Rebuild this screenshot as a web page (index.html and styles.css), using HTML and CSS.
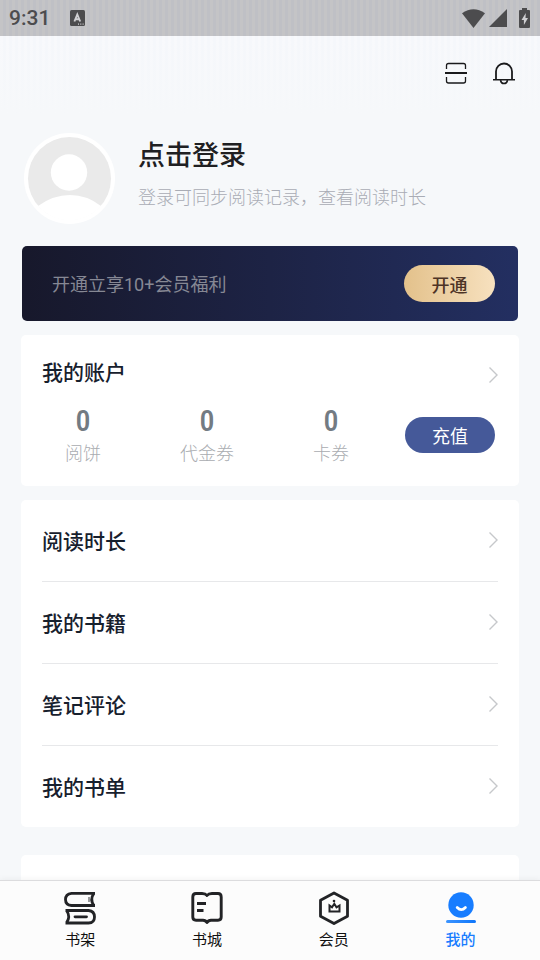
FILE: index.html
```html
<!DOCTYPE html>
<html lang="zh-CN">
<head>
<meta charset="utf-8">
<meta name="viewport" content="width=device-width, initial-scale=1">
<title>我的</title>
<link rel="stylesheet" href="styles.css">
</head>
<body>
<div class="status">
  <span class="status-time">9:31</span>
  <svg class="status-badge" viewBox="0 0 15 16" width="15" height="16" aria-hidden="true"><rect width="15" height="16" rx="1.5" fill="#4c4c4e"/><path d="M4.4 11.5 7.3 4.5 10.2 11.5M5.3 9.3h4" fill="none" stroke="#d0d0d3" stroke-width="1.9"/><path d="M8 14.200h1M10.300 14.200h1M12.600 14.200h1" stroke="#d0d0d3" stroke-width="1.200"/></svg>
  <span class="status-icons">
    <svg viewBox="0 0 23 19" width="23" height="19" aria-hidden="true"><path d="M0 4.2Q11.5-3.6 23 4.2L11.5 19Z" fill="#4c4c4e"/></svg>
    <svg viewBox="0 0 18 18" width="18" height="18" aria-hidden="true"><path d="M18 0V18H0Z" fill="#4c4c4e"/></svg>
    <svg class="battery" viewBox="0 0 11 20" width="11" height="20" aria-hidden="true"><path d="M3 0h5v2h2q1 0 1 1v16q0 1-1 1H1q-1 0-1-1V3q0-1 1-1h2Z" fill="#4c4c4e"/><path d="M6.8 5 2.5 12h2.4v5L9 10H6.5Z" fill="#d0d0d3"/></svg>
  </span>
</div>
<main class="page">
  <header class="tools">
    <button class="icon-button" aria-label="扫一扫"><svg viewBox="0 0 24 24" width="24" height="24"><path d="M2.5 8V4.5Q2.5 2.5 4.5 2.5H19.500Q21.500 2.500 21.500 4.500V8M2.500 16v4Q2.500 22 4.500 22H19.500Q21.500 22 21.500 20V16" fill="none" stroke="#1a1a1c" stroke-width="1.300"/><path d="M1 12h22" stroke="#1a1a1c" stroke-width="2"/></svg></button>
    <button class="icon-button" aria-label="消息"><svg viewBox="0 0 24 24" width="24" height="24"><path d="M4 19V10.500a8 8 0 0 1 16 0V19" fill="none" stroke="#1a1a1c" stroke-width="1.800"/><path d="M1 18.800h22M8.500 19.500q.6 3 3.500 3t3.500-3" fill="none" stroke="#1a1a1c" stroke-width="1.500"/></svg></button>
  </header>
  <a class="profile" href="#login">
    <svg class="avatar" viewBox="0 0 91 91" width="91" height="91" aria-hidden="true"><circle cx="45.500" cy="45.500" r="45.500" fill="#fff"/><circle cx="45.500" cy="45.500" r="41.500" fill="#eaeaea"/><circle cx="45" cy="39.500" r="18.200" fill="#fff"/><path d="M14 73Q29 62 46 62T77 73A42 42 0 0 1 14 73Z" fill="#fff"/></svg>
    <span class="profile-text"><span class="profile-name">点击登录</span><span class="profile-hint">登录可同步阅读记录，查看阅读时长</span></span>
  </a>
  <section class="banner">
    <p class="banner-text">开通立享10+会员福利</p>
    <button class="pill gold">开通</button>
  </section>
  <section class="card account">
    <a class="account-title" href="#account"><span>我的账户</span><svg class="chevron" viewBox="0 0 10 18" width="10" height="18" aria-hidden="true"><path d="M1.500 1.500 9 9 1.500 16.500" /></svg></a>
    <div class="account-row">
      <dl class="stats">
        <div class="stat"><dt>阅饼</dt><dd>0</dd></div>
        <div class="stat"><dt>代金券</dt><dd>0</dd></div>
        <div class="stat"><dt>卡券</dt><dd>0</dd></div>
      </dl>
      <button class="pill blue">充值</button>
    </div>
  </section>
  <nav class="card menu">
    <a href="#time">阅读时长<svg class="chevron" viewBox="0 0 10 18" width="10" height="18" aria-hidden="true"><path d="M1.500 1.500 9 9 1.500 16.500" /></svg></a>
    <a href="#books">我的书籍<svg class="chevron" viewBox="0 0 10 18" width="10" height="18" aria-hidden="true"><path d="M1.500 1.500 9 9 1.500 16.500" /></svg></a>
    <a href="#notes">笔记评论<svg class="chevron" viewBox="0 0 10 18" width="10" height="18" aria-hidden="true"><path d="M1.500 1.500 9 9 1.500 16.500" /></svg></a>
    <a href="#lists">我的书单<svg class="chevron" viewBox="0 0 10 18" width="10" height="18" aria-hidden="true"><path d="M1.500 1.500 9 9 1.500 16.500" /></svg></a>
  </nav>
  <section class="card more"></section>
</main>
<nav class="tabs">
  <a href="#shelf"><svg viewBox="0 0 32 34" width="32" height="34" aria-hidden="true"><g fill="none" stroke="#222326" stroke-width="2.800"><path d="M31 2.300H7.500Q1.500 3 1.500 8.500t6 6H31M29.800 2.500q-4.200 6 0 12"/><path d="M1.500 19.500H24.500q6 .6 6 6.500t-6 6H1.500M2.500 19.500q4.400 6 0 12.400"/><path d="M11 25.800h11.500" stroke-linecap="round"/></g><path d="M25 6v5" stroke="#77787b" stroke-width="1.500"/></svg><span>书架</span></a>
  <a href="#store"><svg viewBox="0 0 32 34" width="32" height="34" aria-hidden="true"><path d="M16 4.500Q14.500 2.500 11 2.500H5Q1.800 2.500 1.800 6V26q0 3.200 3.200 3.200h7q2.700 0 4 2.300 1.300-2.300 4-2.300h7q3.200 0 3.200-3.200V6q0-3.500-3.200-3.500h-6Q17.500 2.500 16 4.500Z" fill="none" stroke="#222326" stroke-width="2.900" stroke-linejoin="round"/><path d="M6 12.500h9M6 19.500h6.500" stroke="#222326" stroke-width="3"/></svg><span>书城</span></a>
  <a href="#vip"><svg viewBox="0 0 32 34" width="32" height="34" aria-hidden="true"><path d="M16 2 29.500 9.300V25.200L16 32.500 2.500 25.200V9.300Z" fill="none" stroke="#222326" stroke-width="2.800" stroke-linejoin="round"/><path d="M11.500 14.500V20.500H21.500V14.500L18.500 16.300 16.300 12.800 14 16.300Z" fill="none" stroke="#222326" stroke-width="2"/><circle cx="16" cy="10" r="1.300" fill="#222326"/></svg><span>会员</span></a>
  <a class="active" href="#me" aria-current="page"><svg viewBox="0 0 32 34" width="32" height="34" aria-hidden="true"><defs><linearGradient id="bar"><stop offset="0" stop-color="#3c94ff"/><stop offset="1" stop-color="#0e76fb"/></linearGradient></defs><circle cx="16" cy="14" r="12.700" fill="#187dff"/><path d="M12.200 16.500Q16.300 20.800 20.400 16.500" fill="none" stroke="#fff" stroke-width="2.800" stroke-linecap="round"/><rect x="1" y="29" width="30" height="3" rx="1.500" fill="url(#bar)"/></svg><span>我的</span></a>
</nav>
</body>
</html>
```
FILE: styles.css
```css
* { box-sizing: border-box; }
body {
  margin: 0;
  height: 100vh;
  display: flex;
  flex-direction: column;
  overflow: hidden;
  color: #17202d;
  background: #f6f8fa;
  font-family: "Noto Sans CJK SC", sans-serif;
}
a { color: inherit; text-decoration: none; }
button { border: 0; padding: 0; font: inherit; cursor: pointer; }
svg { display: block; flex: none; }

.status {
  flex: none;
  height: 36px;
  padding: 0 10px 0 9px;
  display: flex;
  align-items: center;
  gap: 20px;
  color: #4c4c4e;
  background: repeating-linear-gradient(90deg, #c4c4c6 0 3px, #bfc0c5 3px 6px);
}
.status-time { font: 500 21px/36px Roboto, sans-serif; }
.status-icons { margin-left: auto; display: flex; align-items: center; gap: 4px; }
.battery { margin-left: 8px; }

.page {
  flex: 1;
  min-height: 0;
  overflow-y: auto;
  scrollbar-width: none;
  padding: 0 21px;
  background: linear-gradient(#f6f8fa00, #f6f8fa 80px), repeating-linear-gradient(90deg, #f8f9fc 0 3px, #f5f7fb 3px 6px);
}
.tools {
  height: 97px;
  padding: 25px 3px 0;
  display: flex;
  justify-content: flex-end;
  gap: 24px;
}
.icon-button { width: 24px; height: 24px; background: none; }

.profile { display: flex; gap: 23px; padding-left: 3px; height: 113px; }
.profile-text { display: flex; flex-direction: column; }
.profile-name { font-size: 27px; line-height: 42px; font-weight: 500; color: #202022; }
.profile-hint { font-size: 18px; line-height: 28px; margin-top: 7px; font-weight: 300; color: #a9acb5; }

.banner {
  margin: 0 1px 14px;
  height: 75px;
  padding: 0 23px 0 30px;
  display: flex;
  align-items: center;
  justify-content: space-between;
  border-radius: 5px;
  background: linear-gradient(90deg, #17182b, #1d2345 50%, #232f61);
}
.banner-text { margin: 0; padding-bottom: 2px; font-family: Roboto, "Noto Sans CJK SC", sans-serif; font-size: 18px; color: #868894; }
.pill { height: 36px; border-radius: 19px; font-size: 18px; line-height: 34px; }
.gold { width: 91px; height: 37px; color: #4e3426; font-weight: 500; background: linear-gradient(90deg, #e3c18b, #f7e1bf); }
.blue { width: 90px; color: #fff; background: #455999; }

.card { border-radius: 5px; background: #fff; }
.chevron path { fill: none; stroke: #c6c8cb; stroke-width: 1.4; }
.account { height: 151px; padding: 16px 21px 0; margin-bottom: 14px; }
.account-title {
  display: flex;
  justify-content: space-between;
  align-items: center;
  font-size: 21px;
  line-height: 40px;
  font-weight: 500;
}
.account-title .chevron { margin-top: 8px; }
.account-row { display: flex; justify-content: space-between; align-items: center; padding: 13px 3px 0 0; }
.stats { margin: 0; display: flex; gap: 42px; }
.stat { width: 82px; display: flex; flex-direction: column-reverse; align-items: center; }
.stat dt { font-size: 18px; line-height: 28px; font-weight: 300; color: #a9acb0; }
.stat dd { margin: 0; font: 500 30px/34px "Roboto Condensed", "Liberation Sans Narrow", sans-serif; color: #737b83; }

.menu { padding: 0 21px; margin-bottom: 28px; }
.menu a {
  display: flex;
  justify-content: space-between;
  align-items: center;
  height: 82px;
  padding-bottom: 2px;
  font-size: 21px;
  font-weight: 500;
  border-bottom: 1px solid #e7e8ea;
}
.menu a:last-child { height: 81px; border-bottom: 0; }
.more { height: 151px; }

.tabs {
  flex: none;
  height: 80px;
  padding: 0 16px 0 17px;
  display: grid;
  grid-template-columns: repeat(4, 1fr);
  border-top: 1px solid #dcdcde;
  background: #fcfcfc;
  box-shadow: 0 -1px 6px #0000000d;
  position: relative;
}
.tabs a { padding-top: 10px; display: flex; flex-direction: column; align-items: center; font-size: 15px; line-height: 22px; color: #111; gap: 3px; }
.tabs .active { color: #187dff; font-weight: 500; }
```
